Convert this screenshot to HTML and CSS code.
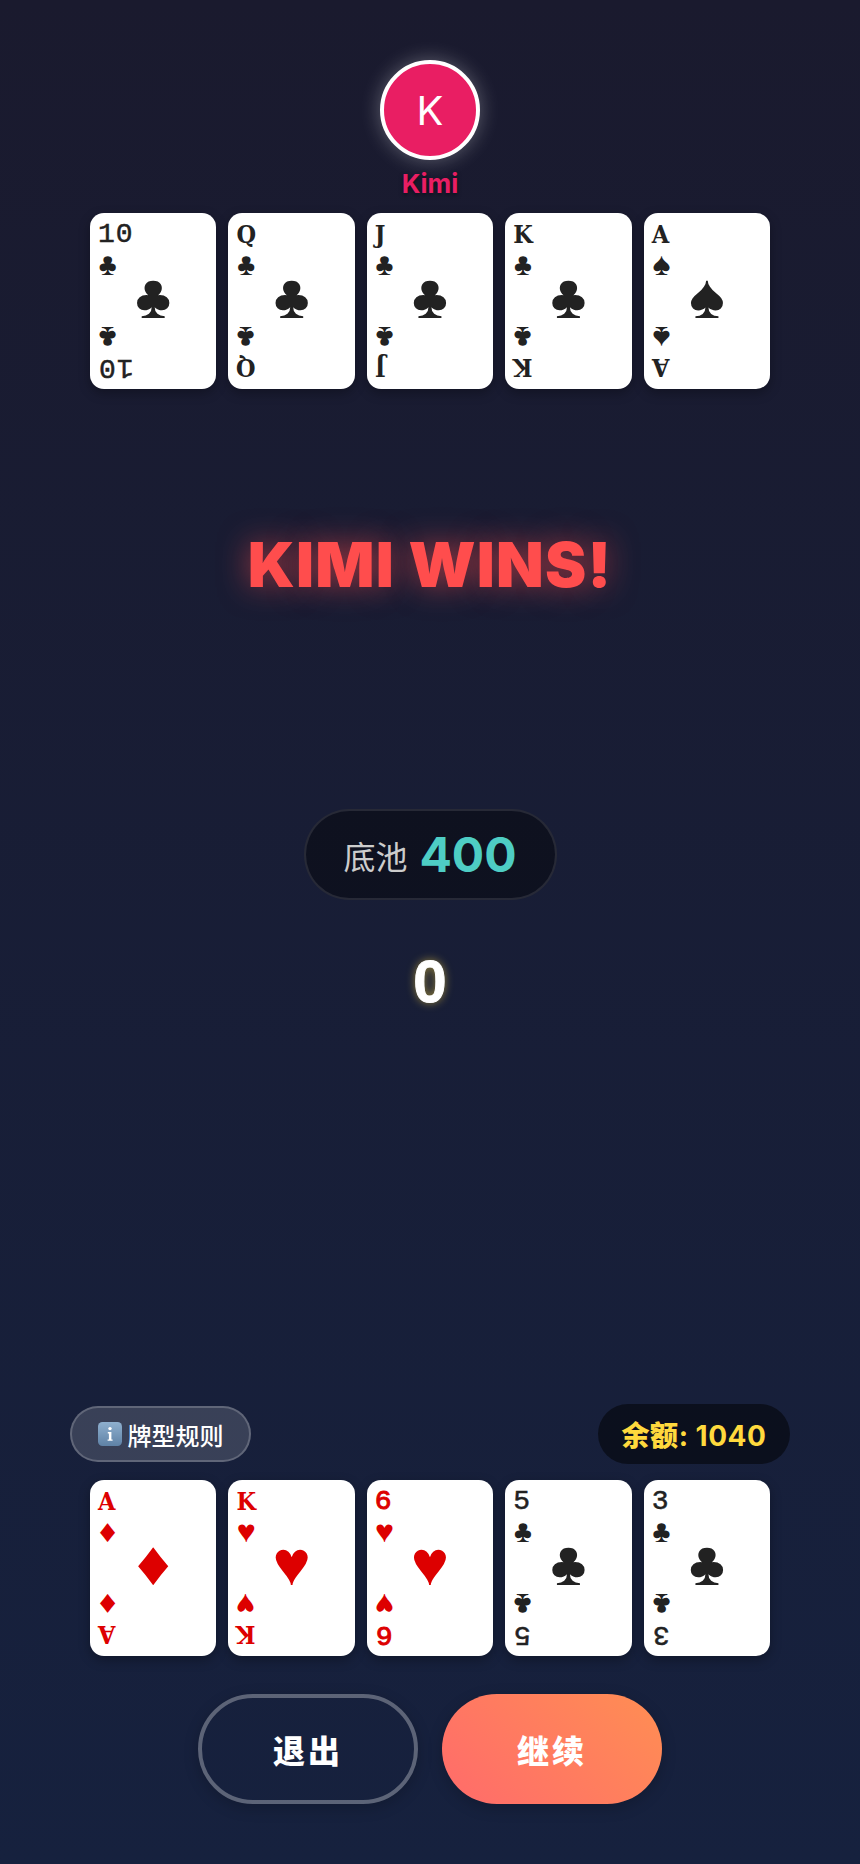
FILE: index.html
```html
<!DOCTYPE html>
<html lang="zh">
<head>
<meta charset="utf-8">
<title>Kimi Poker</title>
<link rel="stylesheet" href="styles.css">
</head>
<body>
<main class="table">
  <section class="opponent">
    <div class="avatar">K</div>
    <div class="name">Kimi</div>
    <div class="hand">
      <div class="card"><div class="corner"><span class="rank">10</span><span class="suit">♣</span></div><div class="pip">♣</div><div class="corner flip"><span class="rank">10</span><span class="suit">♣</span></div></div>
      <div class="card"><div class="corner"><span class="rank face">Q</span><span class="suit">♣</span></div><div class="pip">♣</div><div class="corner flip"><span class="rank face">Q</span><span class="suit">♣</span></div></div>
      <div class="card"><div class="corner"><span class="rank face">J</span><span class="suit">♣</span></div><div class="pip">♣</div><div class="corner flip"><span class="rank face">J</span><span class="suit">♣</span></div></div>
      <div class="card"><div class="corner"><span class="rank face">K</span><span class="suit">♣</span></div><div class="pip">♣</div><div class="corner flip"><span class="rank face">K</span><span class="suit">♣</span></div></div>
      <div class="card"><div class="corner"><span class="rank face">A</span><span class="suit">♠</span></div><div class="pip">♠</div><div class="corner flip"><span class="rank face">A</span><span class="suit">♠</span></div></div>
    </div>
  </section>

  <section class="center">
    <h1 class="result">KIMI WINS!</h1>
    <div class="pot"><span class="pot-label">底池</span><span class="pot-value">400</span></div>
    <div class="count">0</div>
  </section>

  <section class="player">
    <div class="status">
      <button class="rules" type="button">
        <svg class="info" viewBox="0 0 24 24" aria-hidden="true">
          <defs><linearGradient id="infoFill" x1="0" y1="0" x2="0" y2="1"><stop offset="0" stop-color="#8fb0cf"/><stop offset="1" stop-color="#5f82a6"/></linearGradient></defs>
          <rect x="0" y="0" width="24" height="24" rx="4.5" fill="url(#infoFill)"/>
          <circle cx="12" cy="6.6" r="1.7" fill="#fff"/>
          <path d="M9.8 10h3.6v7.4h1.2v1.4H9.6v-1.4h1.3v-6H9.8z" fill="#fff"/>
        </svg>
        <span>牌型规则</span>
      </button>
      <div class="balance"><span><span class="balance-label">余额</span>: 1040</span></div>
    </div>
    <div class="hand">
      <div class="card red"><div class="corner"><span class="rank face">A</span><span class="suit">♦</span></div><div class="pip">♦</div><div class="corner flip"><span class="rank face">A</span><span class="suit">♦</span></div></div>
      <div class="card red"><div class="corner"><span class="rank face">K</span><span class="suit">♥</span></div><div class="pip">♥</div><div class="corner flip"><span class="rank face">K</span><span class="suit">♥</span></div></div>
      <div class="card red"><div class="corner"><span class="rank">6</span><span class="suit">♥</span></div><div class="pip">♥</div><div class="corner flip"><span class="rank">6</span><span class="suit">♥</span></div></div>
      <div class="card"><div class="corner"><span class="rank">5</span><span class="suit">♣</span></div><div class="pip">♣</div><div class="corner flip"><span class="rank">5</span><span class="suit">♣</span></div></div>
      <div class="card"><div class="corner"><span class="rank">3</span><span class="suit">♣</span></div><div class="pip">♣</div><div class="corner flip"><span class="rank">3</span><span class="suit">♣</span></div></div>
    </div>
    <div class="actions">
      <button class="action quit" type="button">退出</button>
      <button class="action next" type="button">继续</button>
    </div>
  </section>
</main>
</body>
</html>
```
FILE: styles.css
```css
* { box-sizing: border-box; }

html, body {
  margin: 0;
  height: 100%;
}

body {
  background: linear-gradient(180deg, #1a1a2e 0%, #16213e 100%);
  color: #fff;
  font-family: Inter, "Noto Sans CJK SC", sans-serif;
}

.table {
  height: 1864px;
  display: flex;
  flex-direction: column;
  padding-top: 60px;
}

.opponent {
  display: flex;
  flex-direction: column;
  align-items: center;
}

.avatar {
  width: 100px;
  height: 100px;
  border-radius: 50%;
  border: 4px solid #fff;
  background: #e91e63;
  box-shadow: 0 0 20px rgba(255, 255, 255, 0.3);
  display: flex;
  align-items: center;
  justify-content: center;
  font-size: 40px;
}

.name {
  margin-top: 8px;
  font-size: 26px;
  line-height: 32px;
  font-weight: 700;
  color: #e91e63;
  text-shadow: 0 2px 4px rgba(0, 0, 0, 0.5);
}

.hand {
  width: 680px;
  margin: 0 auto;
  display: flex;
  gap: 12px;
}

.opponent .hand { margin-top: 13px; }

.card {
  position: relative;
  flex: 1 1 0;
  height: 176px;
  padding: 6px 8px;
  background: #fff;
  border-radius: 14px;
  box-shadow: 0 4px 12px rgba(0, 0, 0, 0.3);
  color: #222;
  display: flex;
  flex-direction: column;
  justify-content: space-between;
}

.card.red { color: #d00; }

.corner {
  display: flex;
  flex-direction: column;
  align-items: flex-start;
  align-self: flex-start;
}

/* the lower corner is turned upside down but its glyphs stay on the left edge */
.corner.flip {
  transform: rotate(180deg);
  align-items: flex-end;
}

.rank {
  font-family: "Liberation Mono", monospace;
  font-size: 28px;
  line-height: 32px;
  letter-spacing: 1px;
  -webkit-text-stroke: 0.5px currentColor;
}

.red .rank:not(.face) { -webkit-text-stroke: 1px currentColor; }

/* court letters use a slab serif in the same column as the numerals */
.rank.face {
  font-family: "DejaVu Serif Condensed", "DejaVu Serif", serif;
  font-size: 25px;
  font-weight: 700;
  letter-spacing: 0;
  -webkit-text-stroke: 0;
  width: 20px;
}

.corner.flip .rank.face { text-align: right; }

.suit {
  font-family: "Liberation Mono", monospace;
  font-size: 32px;
  line-height: 32px;
}

.pip {
  position: absolute;
  inset: 0;
  display: flex;
  align-items: center;
  justify-content: center;
  font-family: "Liberation Mono", monospace;
  font-size: 64px;
}

.center {
  flex: 1;
  display: flex;
  flex-direction: column;
  align-items: center;
}

.result {
  margin: 137px 0 0;
  font-size: 62px;
  line-height: 78px;
  font-weight: 900;
  letter-spacing: 1.2px;
  color: #ff4d4d;
  text-shadow: 0 0 30px rgba(255, 77, 77, 0.6);
}

.pot {
  margin-top: 205px;
  height: 91px;
  width: 253px;
  display: flex;
  align-items: center;
  justify-content: center;
  gap: 12px;
  border: 2px solid rgba(255, 255, 255, 0.1);
  border-radius: 46px;
  background: rgba(0, 0, 0, 0.4);
}

.pot-label {
  font-size: 32px;
  color: #ccc;
}

.pot-value {
  font-size: 48px;
  font-weight: 700;
  color: #4ecdc4;
}

.count {
  margin-top: 46px;
  font-family: "Liberation Sans", sans-serif;
  font-size: 60px;
  line-height: 72px;
  font-weight: 700;
  color: #fff;
  -webkit-text-stroke: 1px #fff;
  text-shadow: 0 0 10px rgba(255, 217, 61, 0.6);
}

.player {
  display: flex;
  flex-direction: column;
  padding-bottom: 60px;
}

.status {
  padding: 0 70px;
  display: flex;
  justify-content: space-between;
  align-items: center;
  margin-bottom: 16px;
}

.rules {
  width: 181px;
  height: 56px;
  display: flex;
  align-items: center;
  justify-content: center;
  gap: 6px;
  padding: 0;
  border: 2px solid rgba(255, 255, 255, 0.2);
  border-radius: 28px;
  background: rgba(255, 255, 255, 0.15);
  color: #fff;
  font: 500 24px Inter, "Noto Sans CJK SC", sans-serif;
}

.info { width: 24px; height: 24px; flex: none; }

.balance {
  width: 192px;
  height: 60px;
  display: flex;
  align-items: center;
  justify-content: center;
  border-radius: 30px;
  background: rgba(0, 0, 0, 0.5);
  color: #ffd93d;
  font-size: 28px;
  font-weight: 700;
  letter-spacing: 0.5px;
}

.balance-label { font-weight: 900; }

.actions {
  margin-top: 38px;
  display: flex;
  justify-content: center;
  gap: 24px;
}

.action {
  width: 220px;
  height: 110px;
  border-radius: 55px;
  color: #fff;
  font: 900 32px Inter, "Noto Sans CJK SC", sans-serif;
  letter-spacing: 3px;
  box-shadow: 0 4px 15px rgba(0, 0, 0, 0.2);
}

.quit {
  border: 4px solid rgba(255, 255, 255, 0.3);
  background: transparent;
}

.next {
  border: 0;
  background: linear-gradient(45deg, #ff6b6b, #ff8e53);
}
```
